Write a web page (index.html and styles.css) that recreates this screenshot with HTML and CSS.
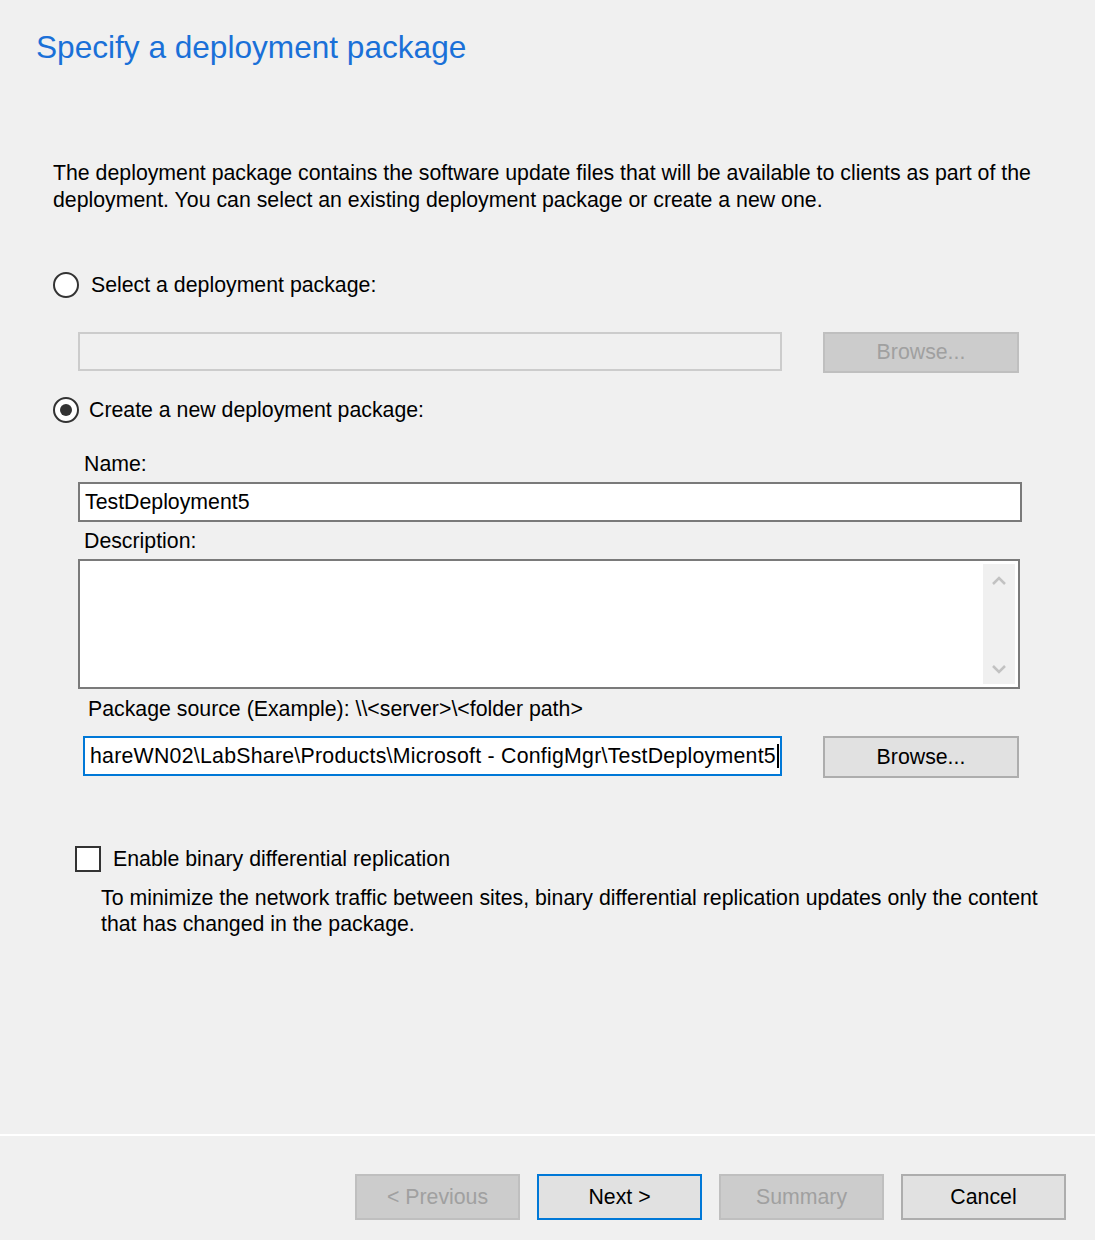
FILE: index.html
```html
<!DOCTYPE html>
<html lang="en">
<head>
    <meta charset="UTF-8">
    <title>Specify a deployment package</title>
    <link rel="stylesheet" href="styles.css">
</head>
<body>
    <div class="wizard">
        <div class="content">
            <h1 class="title">Specify a deployment package</h1>

            <p class="intro">The deployment package contains the software update files that will be available to clients as part of the deployment. You can select an existing deployment package or create a new one.</p>

            <label class="radio-row first">
                <span class="radio"></span>
                <span>Select a deployment package:</span>
            </label>

            <div class="field-row existing">
                <div class="textbox disabled"></div>
                <button class="btn disabled">Browse...</button>
            </div>

            <label class="radio-row second">
                <span class="radio checked"></span>
                <span>Create a new deployment package:</span>
            </label>

            <div class="new-package">
                <div class="label">Name:</div>
                <div class="textbox">TestDeployment5</div>

                <div class="label">Description:</div>
                <div class="textarea">
                    <div class="textarea-body"></div>
                    <div class="scrollbar">
                        <svg width="14" height="10" viewBox="0 0 14 10"><path d="M1 8 L7 2 L13 8" fill="none" stroke="#c2c2c2" stroke-width="2.5"/></svg>
                        <svg width="14" height="10" viewBox="0 0 14 10"><path d="M1 2 L7 8 L13 2" fill="none" stroke="#c2c2c2" stroke-width="2.5"/></svg>
                    </div>
                </div>

                <div class="label source-label">Package source (Example): \\&lt;server&gt;\&lt;folder path&gt;</div>
                <div class="field-row source">
                    <div class="textbox focused"><span class="caret">hareWN02\LabShare\Products\Microsoft - ConfigMgr\TestDeployment5</span></div>
                    <button class="btn">Browse...</button>
                </div>
            </div>

            <label class="check-row">
                <span class="checkbox"></span>
                <span>Enable binary differential replication</span>
            </label>
            <p class="help">To minimize the network traffic between sites, binary differential replication updates only the content that has changed in the package.</p>
        </div>

        <div class="footer">
            <button class="btn wide disabled">&lt; Previous</button>
            <button class="btn wide default">Next &gt;</button>
            <button class="btn wide disabled">Summary</button>
            <button class="btn wide">Cancel</button>
        </div>
    </div>
</body>
</html>
```

FILE: styles.css
```css
body {
    margin: 0;
    background-color: #f0f0f0;
    font-family: 'Liberation Sans', Arial, sans-serif;
    font-size: 21.3px;
    color: #000;
}
.wizard {
    display: flex;
    flex-direction: column;
    height: 100vh;
}
.content {
    flex: 1;
    padding: 0 0 0 36px;
}
.title {
    margin: 28px 0 0 0;
    font-size: 31.6px;
    font-weight: normal;
    color: #1a70d8;
    line-height: 38px;
}
.intro {
    margin: 94px 40px 0 17px;
    line-height: 27px;
}
.radio-row {
    display: flex;
    align-items: center;
    gap: 12px;
    margin-left: 17px;
}
.radio-row.first {
    margin-top: 58px;
}
.radio-row.second {
    margin-top: 24px;
    gap: 10px;
}
.radio {
    width: 22px;
    height: 22px;
    border: 2px solid #333;
    border-radius: 50%;
    background-color: #fff;
    display: flex;
    align-items: center;
    justify-content: center;
}
.radio.checked::after {
    content: '';
    width: 12px;
    height: 12px;
    border-radius: 50%;
    background-color: #333;
}
.field-row {
    display: flex;
    align-items: flex-start;
    gap: 41px;
}
.field-row.existing {
    margin: 34px 0 0 42px;
}
.textbox {
    height: 36px;
    border: 2px solid #7a7a7a;
    background-color: #fff;
    line-height: 36px;
    padding-left: 5px;
    box-sizing: content-box;
    width: 935px;
}
.textbox.disabled {
    width: 700px;
    border-color: #cccccc;
    background-color: #f0f0f0;
    height: 35px;
    padding: 0;
}
.btn {
    font-family: inherit;
    font-size: 21.3px;
    color: #000;
    background-color: #e1e1e1;
    border: 2px solid #adadad;
    width: 196px;
    height: 41px;
    padding: 0;
}
.btn.disabled {
    background-color: #cccccc;
    border-color: #bfbfbf;
    color: #a0a0a0;
}
.new-package {
    margin-left: 42px;
}
.new-package .label {
    margin: 0 0 0 6px;
    line-height: 27px;
}
.new-package .label:first-child {
    margin-top: 28px;
}
.new-package .textbox + .label {
    margin-top: 6px;
}
.new-package .textbox {
    margin-top: 4px;
}
.textarea {
    margin-top: 4px;
    width: 938px;
    height: 126px;
    border: 2px solid #7a7a7a;
    background-color: #fff;
    display: flex;
}
.textarea-body {
    flex: 1;
}
.scrollbar {
    width: 32px;
    margin: 3px 3px 3px 0;
    background-color: #f0f0f0;
    display: flex;
    flex-direction: column;
    justify-content: space-between;
    align-items: center;
    padding: 12px 0 10px;
}
.new-package .label.source-label {
    margin: 7px 0 0 10px;
}
.field-row.source {
    margin: 9px 0 0 5px;
}
.field-row.source .btn {
    height: 42px;
    margin-top: 4px;
}
.textbox.focused {
    width: 690px;
    border-color: #0078d7;
    letter-spacing: 0.25px;
}
.caret {
    border-right: 2px solid #000;
    padding-right: 1px;
}
.check-row {
    display: flex;
    align-items: center;
    gap: 12px;
    margin: 68px 0 0 39px;
}
.checkbox {
    width: 22px;
    height: 22px;
    border: 2px solid #333;
    background-color: #fff;
}
.help {
    margin: 13px 40px 0 65px;
    line-height: 26px;
}
.footer {
    height: 106px;
    border-top: 2px solid #fff;
    display: flex;
    justify-content: flex-end;
    align-items: flex-start;
    gap: 17px;
    padding: 38px 29px 0 0;
    box-sizing: border-box;
}
.btn.wide {
    width: 165px;
    height: 46px;
}
.btn.default {
    border-color: #0078d7;
}
```
